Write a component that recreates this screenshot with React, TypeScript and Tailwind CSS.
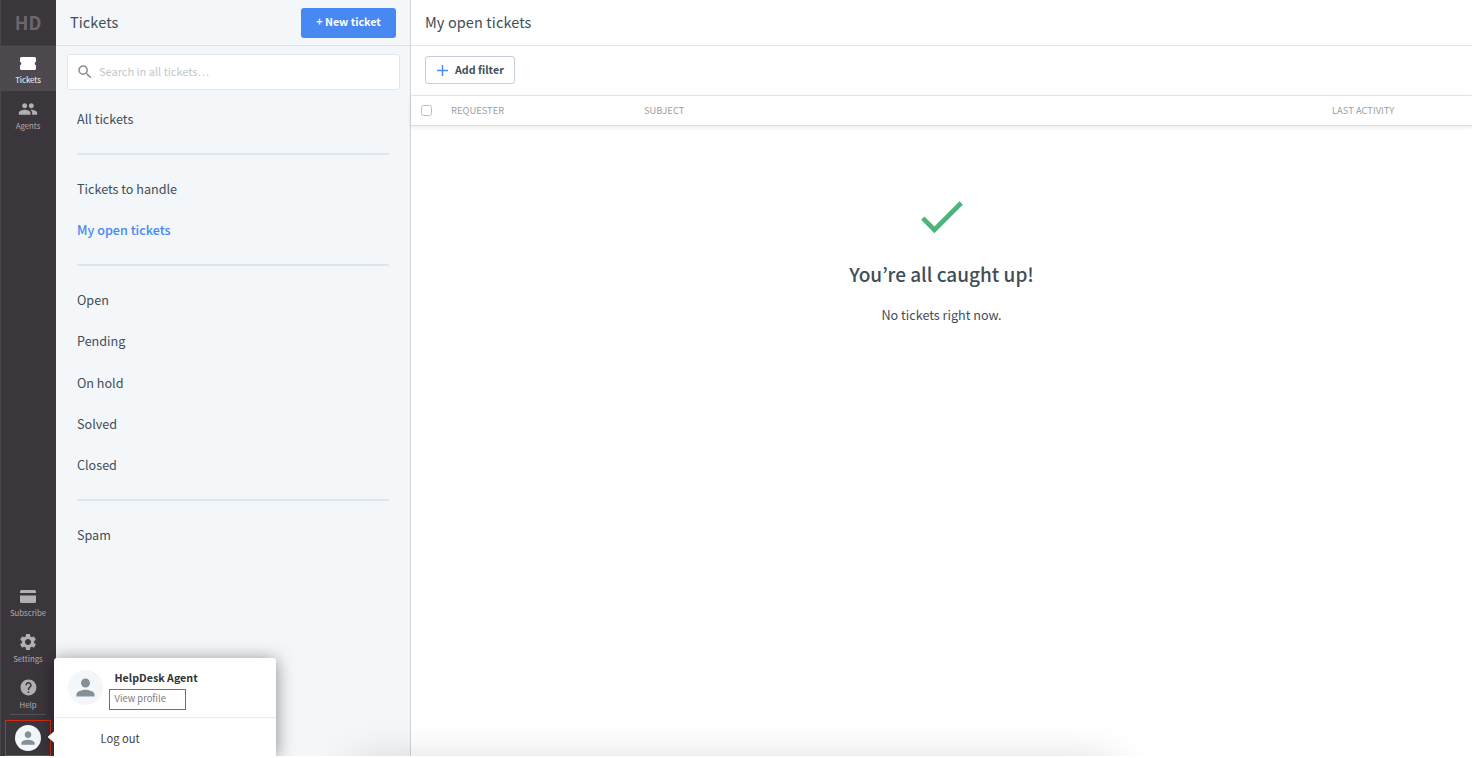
import type { ReactNode } from "react";
import { MdCheck, MdHelp, MdPeople, MdPerson, MdSearch, MdSettings } from "react-icons/md";

interface RailItemProps {
  label: string;
  icon: ReactNode;
  active?: boolean;
}

const FOLDER_GROUPS = [
  ["All tickets"],
  ["Tickets to handle", "My open tickets"],
  ["Open", "Pending", "On hold", "Solved", "Closed"],
  ["Spam"],
];

function TicketIcon() {
  return (
    <svg width="16" height="13" viewBox="0 0 16 13" fill="currentColor">
      <path d="M1.500 0h13A1.500 1.500 0 0 1 16 1.500v3.200a1.900 1.900 0 0 0 0 3.600v3.200a1.500 1.500 0 0 1-1.500 1.500h-13A1.500 1.500 0 0 1 0 11.500V8.300a1.900 1.900 0 0 0 0-3.600V1.500A1.500 1.500 0 0 1 1.500 0z" />
    </svg>
  );
}

function CardIcon() {
  return (
    <svg width="16" height="13" viewBox="0 0 16 13" fill="currentColor">
      <path d="M1.500 0h13A1.500 1.500 0 0 1 16 1.500V3H0V1.500A1.500 1.500 0 0 1 1.500 0zM0 5.500h16v6a1.500 1.500 0 0 1-1.500 1.500h-13A1.500 1.500 0 0 1 0 11.500z" />
    </svg>
  );
}

function RailItem({ label, icon, active = false }: RailItemProps) {
  return (
    <div
      className={`flex h-[45.700px] shrink-0 flex-col items-center pt-[7.500px] ${
        active ? "bg-[#4e494f] text-white" : "text-[#b2afb3]"
      }`}
    >
      <div className="flex h-5 items-center">{icon}</div>
      <span className="text-[7.800px] leading-[14px]">{label}</span>
    </div>
  );
}

function Rail() {
  return (
    <nav className="flex w-14 shrink-0 flex-col bg-[#3b353c] shadow-[inset_1px_0_0_#4a444b]">
      <div className="flex h-[45.500px] shrink-0 items-center justify-center border-b border-[#443e45] text-[18px] font-bold text-[#6c676d]">
        HD
      </div>
      <RailItem label="Tickets" icon={<TicketIcon />} active />
      <RailItem label="Agents" icon={<MdPeople size={20} />} />
      <div className="flex-1" />
      <RailItem label="Subscribe" icon={<CardIcon />} />
      <RailItem label="Settings" icon={<MdSettings size={20} />} />
      <RailItem label="Help" icon={<MdHelp size={19} />} />
      <div className="mx-2.5 -mt-[2px] h-px shrink-0 bg-[#565057]" />
      <div className="mt-[5px] ml-[5px] flex h-9 w-[46px] shrink-0 items-center justify-center border border-[#d42b10]">
        <div className="flex size-[26px] items-center justify-center rounded-full bg-[#f3f7fa]">
          <MdPerson size={20} className="text-[#858f97]" />
        </div>
      </div>
    </nav>
  );
}

function Sidebar() {
  return (
    <aside className="flex w-[355px] shrink-0 flex-col border-r border-[#cdd5dd] bg-[#f3f7fa]">
      <header className="flex h-[46px] shrink-0 items-center justify-between border-b border-[#dbe1e6] px-3.5">
        <h1 className="pb-0.5 text-[14.500px] tracking-[0.1px]">Tickets</h1>
        <button className="h-[30px] w-[95px] rounded-[3px] bg-[#4788f3] text-[10.700px] font-bold text-white">
          + New ticket
        </button>
      </header>
      <div className="mr-2.5 ml-[11px] mt-2 flex h-9 shrink-0 items-center rounded-[3px] border border-[#e2e7eb] bg-white pl-2">
        <MdSearch size={18} className="text-[#8d8d8d]" />
        <span className="ml-[5px] pb-0.5 text-[11px] text-[#c3c7ca]">Search in all tickets…</span>
      </div>
      <div className="mt-2 px-[21px]">
        {FOLDER_GROUPS.map((group, i) => (
          <div key={group[0]}>
            {i > 0 && <hr className="my-[13.500px] h-0.5 border-0 bg-[#dfe5e9]" />}
            {group.map((folder) => (
              <div
                key={folder}
                className={`flex h-[41.200px] items-center pt-px text-[12.600px] ${
                  folder === "My open tickets" ? "font-medium text-[#4788f3]" : ""
                }`}
              >
                {folder}
              </div>
            ))}
          </div>
        ))}
      </div>
    </aside>
  );
}

function TicketList() {
  return (
    <main className="flex min-w-0 flex-1 flex-col bg-white">
      <header className="flex h-[46px] shrink-0 items-center border-b border-[#e2e7eb] pl-3.5">
        <h2 className="pb-0.5 text-[14.500px] tracking-[0.1px]">My open tickets</h2>
      </header>
      <div className="flex h-[50px] shrink-0 items-center border-b border-[#e6eaee] pb-px pl-3.5">
        <button className="flex h-7 w-[90px] items-center rounded-[3px] border border-[#c4cdd8] pl-[11px] text-[10.700px] font-bold">
          <svg width="11" height="11" viewBox="0 0 11 11" stroke="#4788f3" strokeWidth="1.400">
            <path d="M5.500 0v11M0 5.500h11" />
          </svg>
          <span className="ml-[7px]">Add filter</span>
        </button>
      </div>
      <div className="flex h-[30px] shrink-0 items-center border-b border-[#dcdfe2] pl-2.5 text-[9.400px] text-[#9a9fa5] shadow-[0_1px_4px_rgba(0,0,0,0.1)]">
        <div className="size-[11px] rounded-[2.500px] border border-[#bdbfc2] bg-white" />
        <span className="ml-[19px] w-[193px]">REQUESTER</span>
        <span className="flex-1">SUBJECT</span>
        <span className="w-[140px]">LAST ACTIVITY</span>
      </div>
      <div className="flex flex-col items-center pt-[62px]">
        <MdCheck size={57} className="text-[#4fb37c]" />
        {/* The KR cut has a proportional apostrophe, the SC one is full-width */}
        <p className="mt-[13px] font-['Noto_Sans_CJK_KR',sans-serif] text-[19px] leading-8 font-medium">
          You’re all caught up!
        </p>
        <p className="mt-[13px] text-[12.600px] leading-6">No tickets right now.</p>
      </div>
    </main>
  );
}

function ProfileMenu() {
  return (
    <div className="absolute top-[658px] left-[53.500px] h-[98px] w-[222.500px] rounded-t-[3px] bg-white shadow-[0_2px_18px_rgba(0,0,0,0.45)]">
      <div className="absolute top-[73px] -left-[6px] h-3 w-[7px] bg-white [clip-path:polygon(0_50%,100%_0,100%_100%)]" />
      <div className="flex h-[60px] border-b border-[#e9ebed] pt-3 pl-3.5">
        <div className="flex size-[35px] items-center justify-center rounded-full bg-[#f3f7fa]">
          <MdPerson size={27} className="text-[#858f97]" />
        </div>
        <div className="ml-1.5">
          <div className="pl-1.5 text-[10.700px] leading-4 font-bold text-[#333]">HelpDesk Agent</div>
          <div className="mt-[3px] flex h-[21px] w-[77px] items-center border border-[#e0452c] pb-0.5 pl-[5px] text-[9.400px] leading-[17px] text-[#7b7b7b]">
            View profile
          </div>
        </div>
      </div>
      <div className="flex h-[39px] items-center pt-px pl-[47px] text-[11.200px] text-[#424242]">Log out</div>
    </div>
  );
}

export default function App() {
  return (
    <div className="h-[758px] w-[1472px] overflow-hidden bg-white font-['Noto_Sans_CJK_SC',sans-serif] text-[#424d57]">
      <div className="relative flex h-[756px] overflow-hidden">
        <Rail />
        <Sidebar />
        <TicketList />
        {/* Soft glow rising from the bottom edge of the window */}
        <div className="pointer-events-none absolute top-[766px] left-[355px] h-10 w-[760px] shadow-[0_0_45px_rgba(0,0,0,0.2)]" />
        <ProfileMenu />
      </div>
    </div>
  );
}
